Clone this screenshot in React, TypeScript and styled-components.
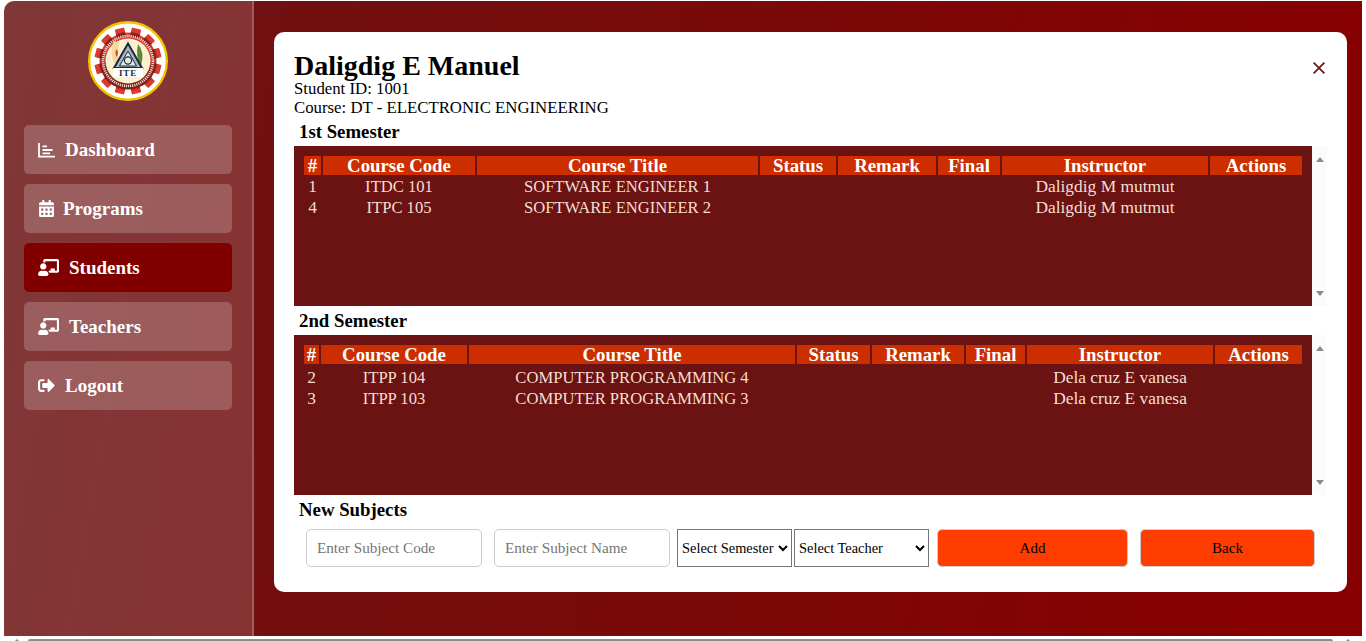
import React from 'react';
import styled, { createGlobalStyle } from 'styled-components';
import { FaCalendarAlt, FaChalkboardTeacher, FaSignOutAlt } from 'react-icons/fa';

const GlobalStyle = createGlobalStyle`
  html, body {
    margin: 0;
    height: 100%;
    overflow: hidden;
    background: #fff;
  }
  body {
    font-family: "Liberation Serif", "Times New Roman", serif;
  }
  * {
    box-sizing: border-box;
  }
`;

interface Course {
  id: number;
  code: string;
  title: string;
  instructor: string;
}

const headers = ['#', 'Course Code', 'Course Title', 'Status', 'Remark', 'Final', 'Instructor', 'Actions'];

const firstSem: Course[] = [
  { id: 1, code: 'ITDC 101', title: 'SOFTWARE ENGINEER 1', instructor: 'Daligdig M mutmut' },
  { id: 4, code: 'ITPC 105', title: 'SOFTWARE ENGINEER 2', instructor: 'Daligdig M mutmut' },
];

const secondSem: Course[] = [
  { id: 2, code: 'ITPP 104', title: 'COMPUTER PROGRAMMING 4', instructor: 'Dela cruz E vanesa' },
  { id: 3, code: 'ITPP 103', title: 'COMPUTER PROGRAMMING 3', instructor: 'Dela cruz E vanesa' },
];

const ChartIcon = () => (
  <svg width="17" height="16" viewBox="0 0 17 16" fill="none" stroke="currentColor" strokeWidth="1.8">
    <path d="M1 1v13.6H17" />
    <path d="M4.5 4.4h4.5M4.5 8h10M4.5 11.4h7.5" />
  </svg>
);

const CloseIcon = () => (
  <svg width="12" height="12" viewBox="0 0 12 12" fill="none" stroke="currentColor" strokeWidth="1.7">
    <path d="M.6.6l10.8 10.8M11.4.6L.6 11.4" />
  </svg>
);

const Logo = () => {
  const teeth = Array.from({ length: 12 }, (_, i) => i * 30);
  return (
    <svg width="80" height="80" viewBox="0 0 80 80">
      <defs>
        <linearGradient id="gear" x1="0" y1="0" x2="0" y2="1">
          <stop offset="0.42" stopColor="#dc3a2e" />
          <stop offset="0.62" stopColor="#8c1f1c" />
          <stop offset="1" stopColor="#7a1a18" />
        </linearGradient>
      </defs>
      <circle cx="40" cy="40" r="38.8" fill="#fff" stroke="#f5c400" strokeWidth="2.4" />
      <g fill="url(#gear)">
        <circle cx="40" cy="40" r="28.5" />
        {teeth.map(a => (
          <rect key={a} x="35.2" y="6.5" width="9.6" height="9" rx="1" transform={`rotate(${a + 15} 40 40)`} />
        ))}
      </g>
      <circle cx="40" cy="40" r="25" fill="none" stroke="#e9d9cf" strokeWidth="2.6" strokeDasharray="1.2 0.9" />
      <circle cx="40" cy="40" r="22.5" fill="#fbf0cf" />
      <path d="M26 20 q-5 10 0 22 h5 q-3-12 1-20z" fill="#f1d9a0" />
      <path d="M28.5 28 q-2 4 0 8 q3-4 0-8z" fill="#d9482c" />
      <path d="M50 23 q7 8 3 22 q-6-9-3-22z" fill="#5c8a3a" />
      <path d="M40 22.5 L54 47 H26 Z" fill="#a8b8c2" stroke="#1b2a3a" strokeWidth="2" />
      <path d="M40 30 L48.5 45 H31.5 Z" fill="#e3e8ea" stroke="#1b2a3a" strokeWidth="1" />
      <circle cx="40" cy="39.5" r="3.6" fill="none" stroke="#1b2a3a" strokeWidth="1.2" />
      <rect x="25" y="47" width="30" height="9" fill="#fff" />
      <LogoText x="40" y="54.5" textAnchor="middle">ITE</LogoText>
    </svg>
  );
};

const SemesterTable: React.FC<{ rows: Course[]; widths: number[]; rowGap?: number }> = ({ rows, widths, rowGap = 0 }) => (
  <TablePanel>
    <TableArea>
      <CourseTable $rowGap={rowGap}>
        <colgroup>
          {widths.map((w, i) => (
            <col key={i} width={w} />
          ))}
        </colgroup>
        <thead>
          <tr>
            {headers.map(h => (
              <HeadCell key={h}>{h}</HeadCell>
            ))}
          </tr>
        </thead>
        <tbody>
          {rows.map(r => (
            <tr key={r.id}>
              <BodyCell>{r.id}</BodyCell>
              <BodyCell $caps>{r.code}</BodyCell>
              <BodyCell $caps>{r.title}</BodyCell>
              <BodyCell />
              <BodyCell />
              <BodyCell />
              <BodyCell>{r.instructor}</BodyCell>
              <BodyCell />
            </tr>
          ))}
        </tbody>
      </CourseTable>
    </TableArea>
    <ScrollTrack>
      <ArrowUp />
      <ArrowDown />
    </ScrollTrack>
  </TablePanel>
);

export default function App() {
  return (
    <>
      <GlobalStyle />
      <Shell>
        <Sidebar>
          <LogoWrap>
            <Logo />
          </LogoWrap>
          <Nav>
            <NavItem><ChartIcon /><NavLabel $gap={10}>Dashboard</NavLabel></NavItem>
            <NavItem><FaCalendarAlt size={17} /><NavLabel $gap={8}>Programs</NavLabel></NavItem>
            <NavItem $active><FaChalkboardTeacher size={21} /><NavLabel $gap={10}>Students</NavLabel></NavItem>
            <NavItem><FaChalkboardTeacher size={21} /><NavLabel $gap={10}>Teachers</NavLabel></NavItem>
            <NavItem><FaSignOutAlt size={17} /><NavLabel $gap={10}>Logout</NavLabel></NavItem>
          </Nav>
        </Sidebar>
        <Main>
          <Card>
            <TitleRow>
              <div>
                <StudentName>Daligdig E Manuel</StudentName>
                <Meta>Student ID: 1001</Meta>
                <Meta>Course: DT - ELECTRONIC ENGINEERING</Meta>
              </div>
              <CloseButton><CloseIcon /></CloseButton>
            </TitleRow>
            <SectionTitle>1st Semester</SectionTitle>
            <SemesterTable rows={firstSem} widths={[17, 152, 281, 76, 98, 62, 206, 92]} />
            <SectionTitle>2nd Semester</SectionTitle>
            <SemesterTable rows={secondSem} widths={[15, 146, 326, 73, 92, 59, 186, 87]} rowGap={2} />
            <SectionTitle>New Subjects</SectionTitle>
            <FormRow>
              <TextInput placeholder="Enter Subject Code" />
              <TextInput placeholder="Enter Subject Name" />
              <SelectGroup>
                <Picker $w={115}>
                  <option>Select Semester</option>
                </Picker>
                <Picker $w={135}>
                  <option>Select Teacher</option>
                </Picker>
              </SelectGroup>
              <ActionButton $w={191}>Add</ActionButton>
              <ActionButton $w={175}>Back</ActionButton>
            </FormRow>
          </Card>
        </Main>
      </Shell>
      <PageScrollbar>
        <ScrollTip />
        <PageThumb />
        <ScrollTip />
      </PageScrollbar>
    </>
  );
}

const Shell = styled.div`
  display: flex;
  height: 635px;
  margin: 1px 4px 0 4px;
  border-radius: 10px 0 0 0;
  overflow: hidden;
  background: linear-gradient(100deg, #6b1414 0%, #870000 95%);
`;

const Sidebar = styled.aside`
  width: 250px;
  flex-shrink: 0;
  padding: 20px 20px 0;
  background: rgba(255, 255, 255, 0.15);
  border-right: 2px solid rgba(255, 255, 255, 0.2);
`;

const LogoWrap = styled.div`
  display: flex;
  justify-content: center;
  margin-bottom: 24px;
`;

const LogoText = styled.text`
  font-family: "Liberation Serif", serif;
  font-size: 9px;
  font-weight: bold;
  letter-spacing: 0.8px;
  fill: #1b2a3a;
`;

const Nav = styled.nav`
  display: flex;
  flex-direction: column;
  gap: 10px;
`;

const NavItem = styled.div<{ $active?: boolean }>`
  display: flex;
  align-items: center;
  height: 49px;
  padding-left: 14px;
  border-radius: 5px;
  color: #fff;
  background: ${p => (p.$active ? '#800000' : 'rgba(255, 255, 255, 0.2)')};
`;

const NavLabel = styled.span<{ $gap: number }>`
  margin-left: ${p => p.$gap}px;
  font-size: 19px;
  line-height: 20px;
  font-weight: bold;
`;

const Main = styled.main`
  flex: 1;
  padding: 31px 15px 0 20px;
`;

const Card = styled.section`
  height: 560px;
  padding: 20px 20px 0;
  background: #fff;
  border-radius: 10px;
`;

const TitleRow = styled.div`
  display: flex;
  justify-content: space-between;
`;

const StudentName = styled.h2`
  margin: 0;
  font-size: 28px;
  line-height: 27px;
  font-weight: bold;
  color: #000;
`;

const Meta = styled.div`
  font-size: 16.8px;
  line-height: 19px;
  color: #000;
`;

const CloseButton = styled.div`
  display: flex;
  margin: 10px 2px 0 0;
  height: 12px;
  color: #6b1414;
`;

const SectionTitle = styled.h3`
  margin: 5px 0 4px;
  padding-left: 5px;
  height: 20px;
  font-size: 18.8px;
  line-height: 20px;
  font-weight: bold;
  color: #000;
`;

const TablePanel = styled.div`
  display: flex;
  height: 160px;
`;

const TableArea = styled.div`
  width: 1018px;
  padding: 8px 8px 0;
  background: #6b1212;
`;

const CourseTable = styled.table<{ $rowGap: number }>`
  width: 1002px;
  table-layout: fixed;
  border-collapse: separate;
  border-spacing: 2px;

  tbody tr:first-child td {
    padding-top: ${p => p.$rowGap}px;
  }
`;

const HeadCell = styled.th`
  height: 19px;
  padding: 0;
  background: #cc2e00;
  color: #fff;
  font-size: 18.8px;
  line-height: 19px;
  font-weight: bold;
  text-align: center;
  white-space: nowrap;
`;

const BodyCell = styled.td<{ $caps?: boolean }>`
  height: 19px;
  padding: 0;
  color: #f5dfcf;
  font-size: ${p => (p.$caps ? '16.6px' : '17.4px')};
  line-height: 19px;
  text-align: center;
  white-space: nowrap;
`;

const ScrollTrack = styled.div`
  display: flex;
  flex-direction: column;
  justify-content: space-between;
  align-items: center;
  width: 15px;
  padding: 11px 0 10px;
  background: #fbfbfb;
`;

const ArrowUp = styled.span`
  width: 0;
  height: 0;
  border-left: 4.5px solid transparent;
  border-right: 4.5px solid transparent;
  border-bottom: 5px solid #8a8a8a;
`;

const ArrowDown = styled.span`
  width: 0;
  height: 0;
  border-left: 4.5px solid transparent;
  border-right: 4.5px solid transparent;
  border-top: 5px solid #8a8a8a;
`;

const FormRow = styled.div`
  display: flex;
  align-items: center;
  margin-top: 9px;
  padding-left: 12px;
`;

const TextInput = styled.input`
  width: 176px;
  height: 38px;
  margin-right: 12px;
  padding: 0 10px;
  border: 1px solid #ccc;
  border-radius: 5px;
  background: #fff;
  font-family: inherit;
  font-size: 15.2px;

  &::placeholder {
    color: #757575;
  }

  &:nth-child(2) {
    margin-right: 7px;
  }
`;

const SelectGroup = styled.div`
  display: flex;
  gap: 2px;
  margin-right: 8px;
`;

const Picker = styled.select<{ $w: number }>`
  width: ${p => p.$w}px;
  height: 38px;
  border: 1px solid #767676;
  border-radius: 0;
  background: #fff;
  color: #000;
  font-family: inherit;
  font-size: 14.4px;
`;

const ActionButton = styled.button<{ $w: number }>`
  width: ${p => p.$w}px;
  height: 38px;
  margin-right: 12px;
  border: 1px solid #ccc;
  border-radius: 5px;
  background: #ff3d00;
  color: #000;
  font-family: inherit;
  font-size: 15px;
`;

const PageScrollbar = styled.div`
  display: flex;
  align-items: flex-end;
  height: 5px;
  padding-left: 15px;
  overflow: hidden;
`;

const ScrollTip = styled.span`
  width: 0;
  height: 0;
  border-left: 2px solid transparent;
  border-right: 2px solid transparent;
  border-bottom: 2px solid #8a8a8a;
`;

const PageThumb = styled.div`
  width: 1305px;
  height: 2px;
  margin: 0 13px 0 9px;
  background: #8f8f8f;
  border-radius: 2px 2px 0 0;
`;
